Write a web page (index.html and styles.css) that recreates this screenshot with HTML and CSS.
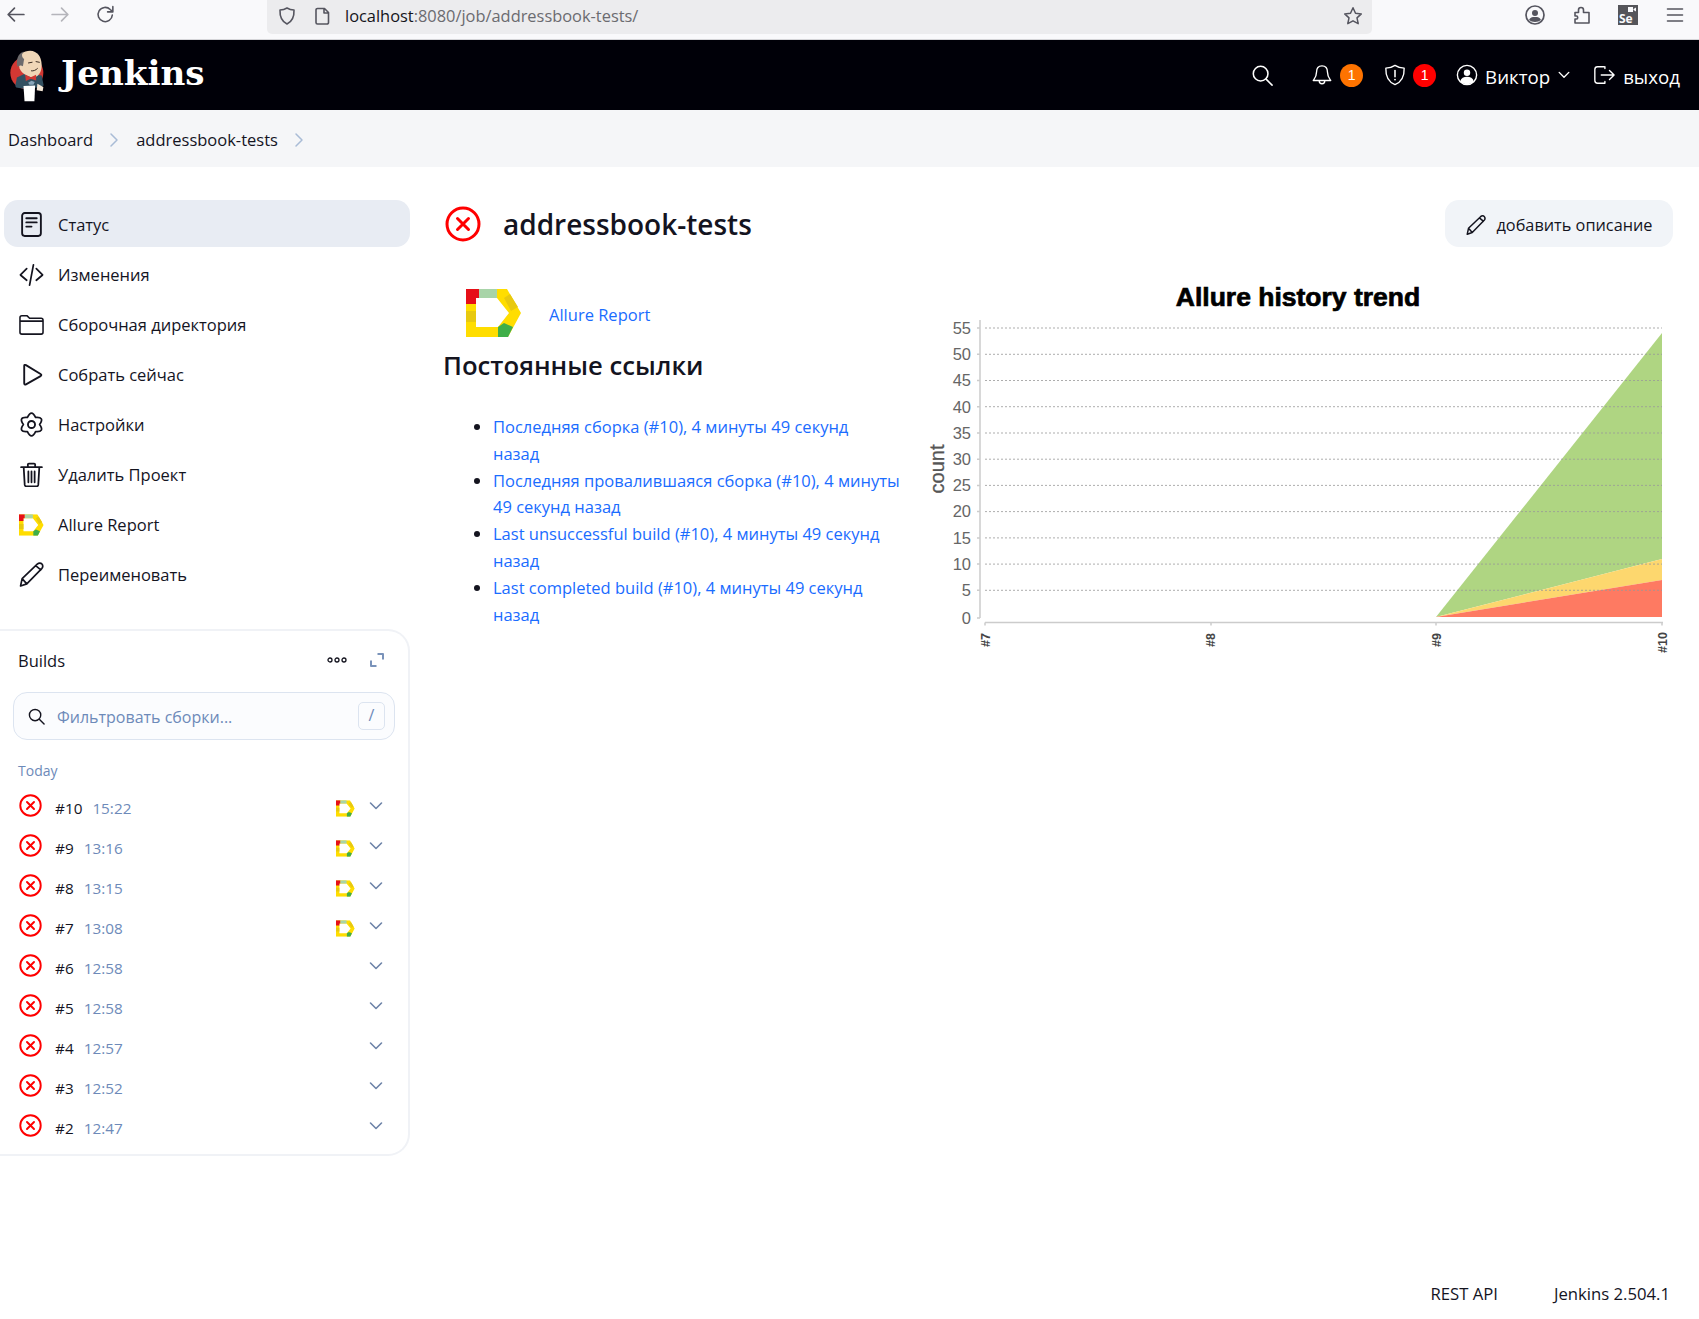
FILE: index.html
```html
<!DOCTYPE html>
<html lang="ru">
<head>
  <meta charset="UTF-8">
  <title>addressbook-tests - Jenkins</title>
  <link rel="stylesheet" href="styles.css">
</head>
<body>
  <svg class="defs" width="0" height="0">
    <symbol id="fail" viewBox="0 0 36 36">
      <circle cx="18" cy="18" r="16" fill="none" stroke="#f00" stroke-width="3"/>
      <path d="M12.5 12.5l11 11M23.5 12.5l-11 11" fill="none" stroke="#f00" stroke-width="3" stroke-linecap="round"/>
    </symbol>
    <symbol id="allure" viewBox="0 0 56 48">
      <path d="M0 0H41L55 24 42 48H0zM10 9V38H32L43 24 31 9z" fill="#ffdd00" fill-rule="evenodd"/>
      <path d="M0 0H13V9H10V15H0z" fill="#e60f17"/>
      <path d="M13 0H31V9H13z" fill="#a8d4a8"/>
      <path d="M0 22H10V33H0zM38 9L44 5 52 18 45 22z" fill="#e8c90f"/>
      <path d="M32 38L38 34 47 38 42 48H32z" fill="#3fae49"/>
    </symbol>
    <symbol id="chev" viewBox="0 0 16 16">
      <path d="M2.500 5l5.500 5.500L13.500 5" fill="none" stroke="currentColor" stroke-width="1.600" stroke-linecap="round" stroke-linejoin="round"/>
    </symbol>
  </svg>

  <div class="browser-bar">
    <div class="nav-btns">
      <svg class="tb-icon" viewBox="0 0 20 20"><path d="M18 10H3M9 4l-6 6 6 6" fill="none" stroke="#55555f" stroke-width="1.600" stroke-linecap="round" stroke-linejoin="round"/></svg>
      <svg class="tb-icon" viewBox="0 0 20 20"><path d="M2 10h15M11 4l6 6-6 6" fill="none" stroke="#b5b5bb" stroke-width="1.600" stroke-linecap="round" stroke-linejoin="round"/></svg>
      <svg class="tb-icon" viewBox="0 0 20 20"><path d="M16.500 10.500a6.800 6.800 0 1 1-2-5.300L17 7.500M17 2.500v5h-5" fill="none" stroke="#55555f" stroke-width="1.500" stroke-linecap="round" stroke-linejoin="round"/></svg>
    </div>
    <div class="url-bar">
      <svg class="tb-icon" viewBox="0 0 20 20"><path d="M10 2c2 1.300 4.500 2 7 2 .3 6.500-1.800 11.500-7 14C4.800 15.500 2.700 10.500 3 4c2.500 0 5-.7 7-2z" fill="none" stroke="#55555f" stroke-width="1.600" stroke-linejoin="round"/></svg>
      <svg class="tb-icon" viewBox="0 0 20 20"><path d="M4.500 2.500h7l4 4v10a1.500 1.500 0 0 1-1.500 1.500H4.500A1.500 1.500 0 0 1 3 16.500V4a1.500 1.500 0 0 1 1.500-1.500zM11 2.500v4.500h4.500" fill="none" stroke="#55555f" stroke-width="1.600" stroke-linejoin="round"/></svg>
      <span class="url"><span class="url-host">localhost</span>:8080/job/addressbook-tests/</span>
      <svg class="tb-icon star" viewBox="0 0 20 20"><path d="M10 1.800l2.500 5.400 5.800.7-4.300 4 1.200 5.800-5.200-2.900-5.200 2.900 1.200-5.800-4.300-4 5.800-.7z" fill="none" stroke="#55555f" stroke-width="1.500" stroke-linejoin="round"/></svg>
    </div>
    <div class="tb-right">
      <svg class="tb-icon" viewBox="0 0 20 20"><circle cx="10" cy="10" r="9" fill="none" stroke="#55555f" stroke-width="1.700"/><circle cx="10" cy="8" r="3" fill="#55555f"/><path d="M4 15c1-2.500 3-3 6-3s5 .5 6 3c-3 2.500-9 2.500-12 0z" fill="#55555f"/></svg>
      <svg class="tb-icon" viewBox="0 0 20 20"><path d="M3 7.500h3.500V5a2.500 2.500 0 0 1 5 0v2.500H17V18H3v-4h2a2 2 0 0 0 0-3H3z" fill="none" stroke="#55555f" stroke-width="1.600" stroke-linejoin="round"/></svg>
      <div class="se-icon"><span class="se-text">Se</span><svg class="se-cam" viewBox="0 0 8 5"><path d="M0 0h5v5H0zM5.500 2L8 .5v4L5.500 3z" fill="#f9f9fb"/></svg></div>
      <svg class="tb-icon" viewBox="0 0 20 20"><path d="M2.500 4h15M2.500 10h15M2.500 16h15" stroke="#55555f" stroke-width="1.600" stroke-linecap="round"/></svg>
    </div>
  </div>

  <header class="jenkins-header">
    <a class="brand">
      <svg class="brand-logo" viewBox="20 20 115 160">
        <circle cx="80" cy="92" r="50" fill="#d33833"/>
        <path d="M45 132L50 106 75 94 125 100 131 130 115 136 70 140 48 136z" fill="#335061"/>
        <path d="M55 62C54 36 70 25 90 25 112 26 124 42 125 68 125 90 114 106 98 106 78 104 62 90 58 78z" fill="#f0d6b7"/>
        <path d="M52 74C46 50 54 34 70 27 62 36 66 46 72 50 70 58 70 64 68 72 62 68 58 70 52 74z" fill="#6d6b6d"/>
        <path d="M85 62l11-2M108 58l10 2M94 86c6 1 13-2 18-7" fill="none" stroke="#3a2a22" stroke-width="3" stroke-linecap="round"/>
        <path d="M75 97L92 105 108 98 108 115 92 110 77 117z" fill="#d33833"/>
        <path d="M84 122l10-6 10 4-4 8-12 0z" fill="#8aa6bb"/>
        <path d="M70 132L105 130 103 178 73 178z" fill="#fff"/>
        <path d="M112 125L130 135 128 148 110 145z" fill="#f4e6d6"/>
      </svg>
      <span class="brand-name">Jenkins</span>
    </a>
    <div class="header-actions">
      <svg class="hd-icon search-ic" viewBox="0 0 24 24"><circle cx="10.500" cy="10.500" r="8" fill="none" stroke="#fff" stroke-width="1.700"/><path d="M16.500 16.500L23 23" stroke="#fff" stroke-width="1.700" stroke-linecap="round"/></svg>
      <div class="hd-group">
        <svg class="hd-icon" viewBox="0 0 24 24"><path d="M12 2c4 0 6 3 6 7 0 5 2 7 3.500 9h-19C4 16 6 14 6 9c0-4 2-7 6-7zM9 18.500a3 3 0 0 0 6 0" fill="none" stroke="#fff" stroke-width="1.500" stroke-linejoin="round"/></svg>
        <span class="badge badge-orange">1</span>
      </div>
      <div class="hd-group">
        <svg class="hd-icon" viewBox="0 0 24 24"><path d="M12 1.500c3 2 6 3 10 3 .3 9-2.500 15-10 18C4.500 19.500 1.700 13.500 2 4.500c4 0 7-1 10-3z" fill="none" stroke="#fff" stroke-width="1.500" stroke-linejoin="round"/><path d="M12 7v7" stroke="#fff" stroke-width="1.700" stroke-linecap="round"/><circle cx="12" cy="17" r="1" fill="#fff"/></svg>
        <span class="badge badge-red">1</span>
      </div>
      <div class="hd-user">
        <svg class="hd-icon" viewBox="0 0 24 24"><circle cx="12" cy="12" r="10.500" fill="none" stroke="#fff" stroke-width="1.500"/><circle cx="12" cy="9.500" r="3.500" fill="#fff"/><path d="M4.500 19c1-3.500 4-5 7.500-5s6.500 1.500 7.500 5c-4 4-11 4-15 0z" fill="#fff"/></svg>
        <span class="hd-label">Виктор</span>
        <svg class="user-chev" viewBox="0 0 16 16"><use href="#chev"/></svg>
      </div>
      <div class="hd-logout">
        <svg class="hd-icon" viewBox="0 0 24 24"><path d="M12 3H5a3 3 0 0 0-3 3v12a3 3 0 0 0 3 3h7M9 12h14M18 7l5 5-5 5M13 3v2M13 19v2" fill="none" stroke="#fff" stroke-width="1.500" stroke-linecap="round" stroke-linejoin="round"/></svg>
        <span class="hd-label">выход</span>
      </div>
    </div>
  </header>

  <nav class="breadcrumbs">
    <a>Dashboard</a>
    <svg class="crumb-sep" viewBox="0 0 10 16"><path d="M2 2l6 6-6 6" fill="none" stroke="#a9bcd6" stroke-width="1.500" stroke-linecap="round" stroke-linejoin="round"/></svg>
    <a>addressbook-tests</a>
    <svg class="crumb-sep" viewBox="0 0 10 16"><path d="M2 2l6 6-6 6" fill="none" stroke="#a9bcd6" stroke-width="1.500" stroke-linecap="round" stroke-linejoin="round"/></svg>
  </nav>

  <div class="page">
    <aside class="side">
      <ul class="tasks">
        <li class="task task-active">
          <svg class="task-icon" viewBox="0 0 24 24"><rect x="3" y="1" width="18" height="22" rx="2.500" fill="none" stroke="#14141f" stroke-width="1.800"/><path d="M7 6h10M7 10h10M7 14h5" stroke="#14141f" stroke-width="1.800" stroke-linecap="round"/></svg>
          <span>Статус</span>
        </li>
        <li class="task">
          <svg class="task-icon" viewBox="0 0 26 24"><path d="M8 6l-6.500 6.500L8 18M18 6l6.500 6.500L18 18M15 2l-4 21" fill="none" stroke="#14141f" stroke-width="1.800" stroke-linecap="round" stroke-linejoin="round"/></svg>
          <span>Изменения</span>
        </li>
        <li class="task">
          <svg class="task-icon" viewBox="0 0 26 24"><path d="M1 5a2 2 0 0 1 2-2h5.500L11 5.500h12a2 2 0 0 1 2 2V20a2 2 0 0 1-2 2H3a2 2 0 0 1-2-2zM1 8.500h24" fill="none" stroke="#14141f" stroke-width="1.600" stroke-linejoin="round"/></svg>
          <span>Сборочная директория</span>
        </li>
        <li class="task">
          <svg class="task-icon" viewBox="0 0 24 24"><path d="M5 3.500v17c0 1 .8 1.500 1.700 1l14-8c1-.5 1-1.500 0-2l-14-8.500C5.800 2.500 5 3 5 3.500z" fill="none" stroke="#14141f" stroke-width="1.800" stroke-linejoin="round"/></svg>
          <span>Собрать сейчас</span>
        </li>
        <li class="task">
          <svg class="task-icon" viewBox="0 0 24 24"><path d="M8.100 5.250Q12-3 15.900 5.250Q25 4.500 19.800 12Q25 19.500 15.900 18.750Q12 27 8.100 18.750Q-1 19.500 4.200 12Q-1 4.500 8.100 5.250z" fill="none" stroke="#14141f" stroke-width="1.700" stroke-linejoin="round"/><circle cx="12" cy="12" r="3.400" fill="none" stroke="#14141f" stroke-width="1.800"/></svg>
          <span>Настройки</span>
        </li>
        <li class="task">
          <svg class="task-icon" viewBox="0 0 24 24"><path d="M2 5h20M8.500 5V2.500a1 1 0 0 1 1-1h5a1 1 0 0 1 1 1V5M4.500 5l1 17a1.500 1.500 0 0 0 1.500 1.300h10a1.500 1.500 0 0 0 1.500-1.300l1-17M9 9v10.500M12 9v10.500M15 9v10.500" fill="none" stroke="#14141f" stroke-width="1.700" stroke-linecap="round" stroke-linejoin="round"/></svg>
          <span>Удалить Проект</span>
        </li>
        <li class="task">
          <svg class="task-icon allure-ic" viewBox="0 0 56 48"><use href="#allure"/></svg>
          <span>Allure Report</span>
        </li>
        <li class="task">
          <svg class="task-icon" viewBox="0 0 24 24"><path d="M1.500 23l1.500-7L17.500 2c1.500-1.300 3.500-1.300 4.500 0s1 3-.2 4.300L7.500 21zM3 16l4.500 5M16 3.500l5.500 4.500" fill="none" stroke="#14141f" stroke-width="1.600" stroke-linejoin="round"/></svg>
          <span>Переименовать</span>
        </li>
      </ul>

      <section class="builds">
        <div class="builds-head">
          <span>Builds</span>
          <div class="builds-tools">
            <svg class="dots" viewBox="0 0 20 6"><circle cx="3" cy="3" r="2" fill="none" stroke="#14141f" stroke-width="1.300"/><circle cx="10" cy="3" r="2" fill="none" stroke="#14141f" stroke-width="1.300"/><circle cx="17" cy="3" r="2" fill="none" stroke="#14141f" stroke-width="1.300"/></svg>
            <svg class="expand" viewBox="0 0 14 14"><path d="M7.500 1H13v5.500M1 7.500V13h5.500" fill="none" stroke="#7a93ba" stroke-width="2" stroke-linejoin="round"/></svg>
          </div>
        </div>
        <div class="filter">
          <svg class="filter-ic" viewBox="0 0 18 18"><circle cx="7.500" cy="7.500" r="6" fill="none" stroke="#14141f" stroke-width="1.500"/><path d="M12 12l5 5" stroke="#14141f" stroke-width="1.500" stroke-linecap="round"/></svg>
          <span class="filter-text">Фильтровать сборки...</span>
          <span class="kbd">/</span>
        </div>
        <div class="day">Today</div>
        <ul class="build-list">
          <li class="build"><svg class="build-st"><use href="#fail"/></svg><span class="build-no">#10</span><span class="build-time">15:22</span><svg class="build-allure" viewBox="0 0 56 48"><use href="#allure"/></svg><svg class="build-chev"><use href="#chev"/></svg></li>
          <li class="build"><svg class="build-st"><use href="#fail"/></svg><span class="build-no">#9</span><span class="build-time">13:16</span><svg class="build-allure" viewBox="0 0 56 48"><use href="#allure"/></svg><svg class="build-chev"><use href="#chev"/></svg></li>
          <li class="build"><svg class="build-st"><use href="#fail"/></svg><span class="build-no">#8</span><span class="build-time">13:15</span><svg class="build-allure" viewBox="0 0 56 48"><use href="#allure"/></svg><svg class="build-chev"><use href="#chev"/></svg></li>
          <li class="build"><svg class="build-st"><use href="#fail"/></svg><span class="build-no">#7</span><span class="build-time">13:08</span><svg class="build-allure" viewBox="0 0 56 48"><use href="#allure"/></svg><svg class="build-chev"><use href="#chev"/></svg></li>
          <li class="build"><svg class="build-st"><use href="#fail"/></svg><span class="build-no">#6</span><span class="build-time">12:58</span><svg class="build-chev"><use href="#chev"/></svg></li>
          <li class="build"><svg class="build-st"><use href="#fail"/></svg><span class="build-no">#5</span><span class="build-time">12:58</span><svg class="build-chev"><use href="#chev"/></svg></li>
          <li class="build"><svg class="build-st"><use href="#fail"/></svg><span class="build-no">#4</span><span class="build-time">12:57</span><svg class="build-chev"><use href="#chev"/></svg></li>
          <li class="build"><svg class="build-st"><use href="#fail"/></svg><span class="build-no">#3</span><span class="build-time">12:52</span><svg class="build-chev"><use href="#chev"/></svg></li>
          <li class="build"><svg class="build-st"><use href="#fail"/></svg><span class="build-no">#2</span><span class="build-time">12:47</span><svg class="build-chev"><use href="#chev"/></svg></li>
        </ul>
      </section>
    </aside>

    <main class="main">
      <div class="title-row">
        <svg class="title-ic"><use href="#fail"/></svg>
        <h1 class="job-title">addressbook-tests</h1>
        <button class="add-desc">
          <svg class="pencil" viewBox="0 0 24 24"><path d="M1.500 23l1.500-7L17.500 2c1.500-1.300 3.500-1.300 4.500 0s1 3-.2 4.300L7.500 21zM3 16l4.500 5M16 3.500l5.500 4.500" fill="none" stroke="#14141f" stroke-width="1.800" stroke-linejoin="round"/></svg>
          добавить описание
        </button>
      </div>
      <div class="job-body">
        <div class="job-left">
          <div class="allure-row">
            <svg class="allure-big" viewBox="0 0 56 48"><use href="#allure"/></svg>
            <a class="link">Allure Report</a>
          </div>
          <h2 class="perm-title">Постоянные ссылки</h2>
          <ul class="perm-list">
            <li><a class="link">Последняя сборка (#10), 4 минуты 49 секунд<br>назад</a></li>
            <li><a class="link">Последняя провалившаяся сборка (#10), 4 минуты 49 секунд назад</a></li>
            <li><a class="link">Last unsuccessful build (#10), 4 минуты 49 секунд назад</a></li>
            <li><a class="link">Last completed build (#10), 4 минуты 49 секунд назад</a></li>
          </ul>
        </div>
        <svg class="trend" width="760" height="385" viewBox="920 270 760 385">
          <text class="tr-title" x="1298" y="306" text-anchor="middle">Allure history trend</text>
          <path d="M1436 617L1662 333V559z" fill="#afd582"/>
          <path d="M1436 617L1662 559V580z" fill="#fdd76e"/>
          <path d="M1436 617L1662 580V617z" fill="#fe7a62"/>
          <g class="tr-grid">
            <path d="M985 328H1662M985 354.300H1662M985 380.500H1662M985 406.700H1662M985 433H1662M985 459.200H1662M985 485.400H1662M985 511.600H1662M985 537.900H1662M985 564.100H1662M985 590.300H1662"/>
          </g>
          <path d="M980 320V618M977 328h3M977 354.300h3M977 380.500h3M977 406.700h3M977 433h3M977 459.200h3M977 485.400h3M977 511.600h3M977 537.900h3M977 564.100h3M977 590.300h3M977 618h3M985 622.500H1663M985 622.500v3M1211 622.500v3M1436 622.500v3M1662 622.500v3" fill="none" stroke="#ccc" stroke-width="1.500"/>
          <g class="tr-y">
            <text x="971" y="334">55</text><text x="971" y="360">50</text><text x="971" y="386">45</text><text x="971" y="413">40</text><text x="971" y="439">35</text><text x="971" y="465">30</text><text x="971" y="491">25</text><text x="971" y="517">20</text><text x="971" y="544">15</text><text x="971" y="570">10</text><text x="971" y="596">5</text><text x="971" y="624">0</text>
          </g>
          <text class="tr-count" transform="translate(944 469) rotate(-90)" text-anchor="middle">count</text>
          <g class="tr-x">
            <text transform="translate(990 647) rotate(-90)">#7</text>
            <text transform="translate(1215 647) rotate(-90)">#8</text>
            <text transform="translate(1441 647) rotate(-90)">#9</text>
            <text transform="translate(1667 653) rotate(-90)">#10</text>
          </g>
        </svg>
      </div>
    </main>
  </div>

  <footer class="page-foot">
    <a>REST API</a>
    <a>Jenkins 2.504.1</a>
  </footer>
</body>
</html>
```

FILE: styles.css
```css
* {
  box-sizing: border-box;
}
html, body {
  margin: 0;
  padding: 0;
}
body {
  font-family: "Open Sans", "Noto Sans", sans-serif;
  font-size: 16px;
  color: #14141f;
  background-color: #fff;
  width: 1699px;
  height: 1319px;
  display: flex;
  flex-direction: column;
  overflow: hidden;
}
ul {
  margin: 0;
  padding: 0;
  list-style: none;
}
.defs {
  position: absolute;
}

/* browser chrome */
.browser-bar {
  height: 40px;
  background-color: #f9f9fb;
  border-bottom: 1px solid #d5d5d8;
  display: flex;
  flex-shrink: 0;
}
.tb-icon {
  width: 20px;
  height: 20px;
  flex-shrink: 0;
}
.nav-btns {
  width: 267px;
  height: 28px;
  padding-left: 5px;
  display: flex;
  align-items: center;
  gap: 22px;
}
.nav-btns .tb-icon {
  width: 21px;
  height: 21px;
  margin-right: 2px;
}
.url-bar {
  width: 1105px;
  height: 34px;
  background-color: #ececee;
  border-radius: 0 0 5px 5px;
  display: flex;
  align-items: center;
  padding: 0 9px 3px 10px;
  gap: 16px;
}
.url {
  font-size: 16.400px;
  color: #6b6b70;
  flex: 1;
  margin-left: -4px;
}
.url-host {
  color: #15141a;
}
.tb-right {
  flex: 1;
  height: 30px;
  padding-left: 153px;
  display: flex;
  align-items: center;
  gap: 26.500px;
}
.se-icon {
  width: 20px;
  height: 20px;
  background-color: #55555a;
  position: relative;
  flex-shrink: 0;
}
.se-text {
  position: absolute;
  left: 1px;
  bottom: -1px;
  font-size: 12px;
  font-weight: 700;
  color: #f9f9fb;
  line-height: 14px;
}
.se-cam {
  position: absolute;
  right: 2px;
  top: 2px;
  width: 8px;
  height: 5px;
}

/* jenkins header */
.jenkins-header {
  height: 70px;
  background-color: #000008;
  color: #fff;
  display: flex;
  align-items: center;
  justify-content: space-between;
  flex-shrink: 0;
}
.brand {
  display: flex;
  align-items: center;
  padding-left: 7px;
}
.brand-logo {
  width: 38px;
  height: 53px;
}
.brand-name {
  font-family: "DejaVu Serif", "Liberation Serif", serif;
  font-weight: 700;
  font-size: 34.200px;
  margin: -5px 0 0 16px;
}
.header-actions {
  display: flex;
  align-items: center;
  font-size: 18.700px;
  padding-right: 19px;
}
.hd-icon {
  width: 22px;
  height: 22px;
  flex-shrink: 0;
}
.hd-label {
  padding-top: 2px;
}
.search-ic {
  margin-right: 38px;
}
.hd-group {
  display: flex;
  align-items: center;
  gap: 7px;
}
.hd-group + .hd-group {
  margin-left: 21px;
}
.badge {
  width: 23px;
  height: 23px;
  border-radius: 50%;
  font-family: "Liberation Sans", sans-serif;
  font-size: 14px;
  text-align: center;
  line-height: 23px;
}
.badge-orange {
  background-color: #fe7300;
}
.badge-red {
  background-color: #f00;
}
.hd-user {
  display: flex;
  align-items: center;
  gap: 7px;
  margin-left: 20px;
}
.user-chev {
  width: 14px;
  height: 14px;
  color: #fff;
}
.hd-logout {
  display: flex;
  align-items: center;
  gap: 8px;
  margin-left: 22px;
}

/* breadcrumbs */
.breadcrumbs {
  height: 57px;
  padding-top: 2px;
  background-color: #f5f6f8;
  display: flex;
  align-items: center;
  padding-left: 8px;
  font-size: 16.500px;
  flex-shrink: 0;
}
.crumb-sep {
  width: 10px;
  height: 16px;
  margin: 0 17px 0 16px;
}
.crumb-sep:last-child {
  margin-left: 16px;
}

/* page layout */
.page {
  flex: 1;
  display: flex;
  padding-top: 33px;
}
.side {
  width: 443px;
  flex-shrink: 0;
}
.tasks {
  padding-left: 4px;
  width: 410px;
  display: flex;
  flex-direction: column;
  gap: 3px;
}
.task {
  height: 47px;
  border-radius: 14px;
  display: flex;
  align-items: center;
  padding: 2px 0 0 15px;
  gap: 14px;
  font-size: 16.500px;
}
.task-active {
  background-color: #e8ecf3;
}
.task-icon {
  width: 25px;
  height: 25px;
  flex-shrink: 0;
}
.allure-ic {
  height: 22px;
}

/* builds card */
.builds {
  width: 410px;
  height: 527px;
  margin-top: 32px;
  border: 2px solid #f0f2f6;
  border-left: 0;
  border-radius: 0 22px 22px 0;
  padding: 0 13px;
}
.builds-head {
  height: 61px;
  display: flex;
  align-items: center;
  justify-content: space-between;
  padding: 0 10px 3px 5px;
  font-size: 16.500px;
}
.builds-tools {
  display: flex;
  align-items: center;
  gap: 23px;
  padding-right: 1px;
}
.dots {
  width: 20px;
  height: 6px;
}
.expand {
  width: 14px;
  height: 14px;
}
.filter {
  height: 48px;
  border: 1.500px solid #dce4f0;
  border-radius: 14px;
  background-color: #fbfcfe;
  display: flex;
  align-items: center;
  padding: 0 9px 0 14px;
  gap: 12px;
}
.filter-ic {
  width: 17px;
  height: 17px;
}
.filter-text {
  flex: 1;
  padding-top: 2px;
  font-size: 16px;
  color: #6d8ab9;
}
.kbd {
  width: 27px;
  height: 28px;
  border: 1.500px solid #dce4f0;
  border-radius: 5px;
  text-align: center;
  color: #6d8ab9;
  font-size: 16px;
  line-height: 24px;
}
.day {
  margin-top: 19px;
  padding-left: 5px;
  font-size: 14px;
  line-height: 24px;
  color: #6d8ab9;
}
.build-list {
  margin-top: 5px;
}
.build {
  height: 40px;
  display: flex;
  align-items: center;
  padding: 0 11px 0 6px;
  font-size: 15.300px;
}
.build-st {
  width: 23px;
  height: 23px;
  margin: -5px 13px 0 0;
}
.build-no {
  margin-right: 10px;
}
.build-time {
  flex: 1;
  color: #6d8ab9;
}
.build-allure {
  width: 19px;
  height: 17px;
  margin-right: 13px;
}
.build-chev {
  width: 16px;
  height: 16px;
  color: #6d83a8;
  margin-top: -5px;
}

/* main column */
.main {
  flex: 1;
  padding-right: 26px;
  min-width: 0;
}
.title-row {
  height: 47px;
  display: flex;
  align-items: center;
}
.title-ic {
  width: 36px;
  height: 36px;
  margin-left: 2px;
}
.job-title {
  flex: 1;
  margin: 0 0 0 22px;
  font-size: 28px;
  font-weight: 600;
}
.add-desc {
  width: 228px;
  height: 47px;
  border: 0;
  padding: 2px 0 0;
  border-radius: 14px;
  background-color: #f1f4f8;
  font-family: inherit;
  font-size: 16.300px;
  color: #14141f;
  display: flex;
  align-items: center;
  justify-content: center;
  gap: 11px;
}
.pencil {
  width: 20px;
  height: 20px;
}
.job-body {
  display: flex;
  margin-right: -26px;
}
.job-left {
  width: 477px;
  flex-shrink: 0;
}
.allure-row {
  display: flex;
  align-items: center;
  height: 48px;
  margin-top: 42px;
  padding-left: 23px;
  gap: 27px;
}
.allure-row .link {
  padding-top: 2px;
}
.allure-big {
  width: 56px;
  height: 48px;
}
.link {
  color: #1a6cff;
  font-size: 16.500px;
}
.perm-title {
  margin: 11px 0 0;
  font-size: 25.700px;
  font-weight: 600;
  line-height: 36px;
}
.perm-list {
  list-style: disc;
  margin-top: 30px;
  padding: 0 20px 0 50px;
  font-size: 16.500px;
  line-height: 26.800px;
}
.trend {
  margin-top: 23px;
  flex-shrink: 0;
}

/* chart text */
.tr-title {
  font-family: "Liberation Sans", sans-serif;
  font-size: 26.500px;
  font-weight: 700;
  fill: #000;
  stroke: #000;
  stroke-width: .7;
}
.tr-grid path {
  fill: none;
  stroke: #999;
  stroke-opacity: .8;
  stroke-width: 1;
  stroke-dasharray: 2 2;
}
.tr-y text {
  font-family: "Liberation Sans", sans-serif;
  font-size: 16.500px;
  fill: #666;
  text-anchor: end;
}
.tr-count {
  font-family: "Liberation Sans", sans-serif;
  font-size: 20px;
  fill: #555;
  stroke: #555;
  stroke-width: .3;
}
.tr-x text {
  font-family: "Liberation Sans", sans-serif;
  font-size: 12.500px;
  font-weight: 700;
  fill: #444;
}

/* footer */
.page-foot {
  height: 60px;
  display: flex;
  justify-content: flex-end;
  gap: 56px;
  padding: 23px 29px 0 0;
  font-size: 16.700px;
  flex-shrink: 0;
}
```
